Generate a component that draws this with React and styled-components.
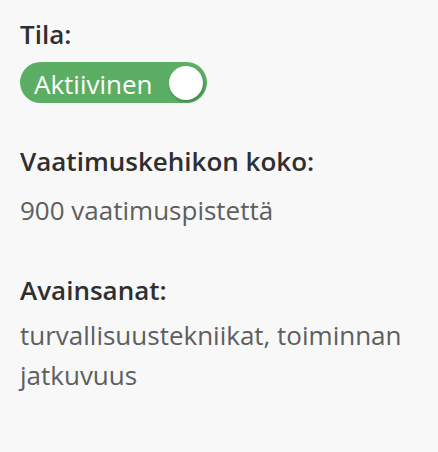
import React from "react";
import styled, { createGlobalStyle } from "styled-components";

const GlobalStyle = createGlobalStyle`
  html, body {
    margin: 0;
    padding: 0;
    background: #f8f8f8;
  }
  body {
    font-family: "Open Sans", "Noto Sans", sans-serif;
  }
`;

const Container = styled.div`
  width: 438px;
  height: 452px;
  box-sizing: border-box;
  padding: 16px 20px 0 20px;
  display: flex;
  flex-direction: column;
`;

const Field = styled.div`
  display: flex;
  flex-direction: column;
  margin-bottom: ${props => props.gap || 0}px;
`;

const Label = styled.span`
  font-size: 26px;
  font-weight: 600;
  color: #2f2f2f;
  line-height: 36px;
`;

const Value = styled.span`
  font-size: 26px;
  color: #5e5e5e;
  line-height: 40px;
  margin-top: ${props => props.offset || 10}px;
`;

const Toggle = styled.div`
  margin-top: 10px;
  width: 187px;
  height: 41px;
  box-sizing: border-box;
  border-radius: 21px;
  background: #5bae63;
  display: flex;
  align-items: center;
  justify-content: space-between;
  padding: 0 4px 0 14px;
`;

const ToggleText = styled.span`
  font-size: 26px;
  color: #ffffff;
  line-height: 1;
  padding-top: 3px;
`;

const Knob = styled.span`
  width: 34px;
  height: 34px;
  border-radius: 50%;
  background: #ffffff;
  box-shadow: 1px 2px 3px rgba(0, 0, 0, 0.25);
`;

const App = () => (
  <Container>
    <GlobalStyle />
    <Field gap={40}>
      <Label>Tila:</Label>
      <Toggle>
        <ToggleText>Aktiivinen</ToggleText>
        <Knob />
      </Toggle>
    </Field>
    <Field gap={42}>
      <Label>Vaatimuskehikon koko:</Label>
      <Value offset={11}>900 vaatimuspistettä</Value>
    </Field>
    <Field>
      <Label>Avainsanat:</Label>
      <Value offset={7}>turvallisuustekniikat, toiminnan jatkuvuus</Value>
    </Field>
  </Container>
);

export default App;
